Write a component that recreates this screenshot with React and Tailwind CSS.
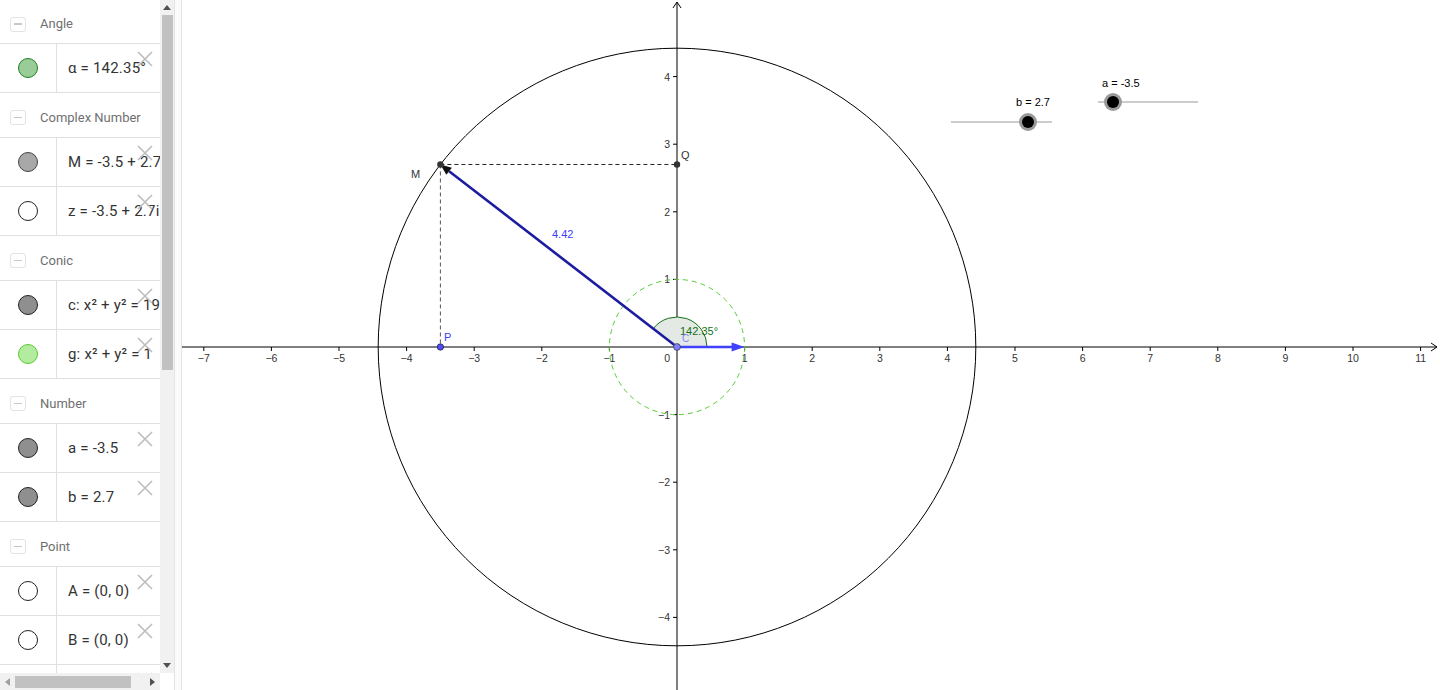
import React from "react";

const O = { x: 677, y: 347 };
const U = 67.6;

const groups = [
  {
    title: "Angle",
    first: true,
    items: [{ text: "α = 142.35°", fill: "#99cc99", stroke: "#1f7f1f" }],
  },
  {
    title: "Complex Number",
    items: [
      { text: "M = -3.5 + 2.7i", fill: "#a8a8a8", stroke: "#444444" },
      { text: "z = -3.5 + 2.7i", fill: "#ffffff", stroke: "#222222" },
    ],
  },
  {
    title: "Conic",
    items: [
      { text: "c: x² + y² = 19.49", fill: "#8f8f8f", stroke: "#222222" },
      { text: "g: x² + y² = 1", fill: "#b3eb9f", stroke: "#55cc33" },
    ],
  },
  {
    title: "Number",
    items: [
      { text: "a = -3.5", fill: "#8f8f8f", stroke: "#222222" },
      { text: "b = 2.7", fill: "#8f8f8f", stroke: "#222222" },
    ],
  },
  {
    title: "Point",
    items: [
      { text: "A = (0, 0)", fill: "#ffffff", stroke: "#222222" },
      { text: "B = (0, 0)", fill: "#ffffff", stroke: "#222222" },
      { text: "C = (0, 0)", fill: "#ffffff", stroke: "#222222" },
    ],
  },
];

const CloseX = () => (
  <svg className="absolute right-[7px] top-[7px]" width="16" height="16" viewBox="0 0 16 16">
    <path d="M1 1 L15 15 M15 1 L1 15" stroke="#bdbdbd" strokeWidth="1.6" fill="none" />
  </svg>
);

const Header = ({ title, first }) => (
  <div
    className={`flex items-center border-b border-[#e0e0e0] pt-[5px] ${first ? "h-[44px]" : "h-[45px]"}`}
  >
    <div className="ml-[10px] flex h-[15px] w-[16px] items-center justify-center rounded-[3px] border border-[#e3e3e3]">
      <div className="h-[1.5px] w-[8px] bg-[#c8c8c8]" />
    </div>
    <span className="ml-[14px] text-[13px] text-[#707070]">{title}</span>
  </div>
);

const Row = ({ text, fill, stroke }) => (
  <div className="relative flex h-[49px] border-b border-[#e0e0e0]">
    <div className="flex w-[57px] shrink-0 items-center justify-center border-r border-[#e0e0e0]">
      <div
        className="h-[20px] w-[20px] rounded-full border"
        style={{ background: fill, borderColor: stroke }}
      />
    </div>
    <div className="flex items-center whitespace-nowrap pl-[11px] text-[15px] tracking-[0.2px] text-[#333]">
      {text}
    </div>
    <CloseX />
  </div>
);

const Tri = ({ dir }) => {
  const d = {
    up: "M0 5 L4 0 L8 5 Z",
    down: "M0 0 L8 0 L4 5 Z",
    left: "M5 0 L5 8 L0 4 Z",
    right: "M0 0 L5 4 L0 8 Z",
  }[dir];
  const w = dir === "up" || dir === "down" ? 8 : 5;
  const h = dir === "up" || dir === "down" ? 5 : 8;
  return (
    <svg width={w} height={h} viewBox={`0 0 ${w} ${h}`}>
      <path d={d} fill={dir === "left" ? "#a0a0a0" : "#505050"} />
    </svg>
  );
};

const Graph = () => {
  const px = (v) => O.x + v * U;
  const py = (v) => O.y - v * U;
  const xs = [];
  for (let i = -7; i <= 11; i++) if (i !== 0) xs.push(i);
  const ys = [-4, -3, -2, -1, 1, 2, 3, 4];
  const M = { x: px(-3.5), y: py(2.7) };
  const R = Math.sqrt(3.5 * 3.5 + 2.7 * 2.7) * U;
  const ang = (142.35 * Math.PI) / 180;
  const ar = 30;
  const ae = { x: O.x + ar * Math.cos(ang), y: O.y - ar * Math.sin(ang) };
  // arrowhead on OM
  const dx = M.x - O.x;
  const dy = M.y - O.y;
  const L = Math.hypot(dx, dy);
  const ux = dx / L;
  const uy = dy / L;
  const bx = M.x - 11 * ux;
  const by = M.y - 11 * uy;
  const head = `${M.x},${M.y} ${bx - 4.5 * uy},${by + 4.5 * ux} ${bx + 4.5 * uy},${by - 4.5 * ux}`;
  const lbl = { fontFamily: "'Liberation Sans', Arial, sans-serif" };

  return (
    <svg className="block h-[690px] flex-1" viewBox="182 0 1258 690">
      <rect x="182" y="0" width="1258" height="690" fill="#ffffff" />
      {/* axes */}
      <line x1="182" y1={O.y} x2="1437" y2={O.y} stroke="#000" strokeWidth="1" />
      <path d={`M1431 ${O.y - 4} L1437 ${O.y} L1431 ${O.y + 4}`} stroke="#000" fill="none" />
      <line x1={O.x} y1="690" x2={O.x} y2="2" stroke="#000" strokeWidth="1" />
      <path d={`M${O.x - 4} 8 L${O.x} 2 L${O.x + 4} 8`} stroke="#000" fill="none" />
      {xs.map((i) => (
        <g key={"x" + i}>
          <line x1={px(i)} y1={O.y} x2={px(i)} y2={O.y + 4} stroke="#000" />
          <text x={px(i)} y={O.y + 15} fontSize="10.5" textAnchor="middle" fill="#333" style={lbl}>
            {i < 0 ? "−" + -i : i}
          </text>
        </g>
      ))}
      {ys.map((i) => (
        <g key={"y" + i}>
          <line x1={O.x - 4} y1={py(i)} x2={O.x} y2={py(i)} stroke="#000" />
          <text x={O.x - 7} y={py(i) + 4} fontSize="10.5" textAnchor="end" fill="#333" style={lbl}>
            {i < 0 ? "−" + -i : i}
          </text>
        </g>
      ))}
      <text x={O.x - 7} y={O.y + 15} fontSize="10.5" textAnchor="end" fill="#333" style={lbl}>
        0
      </text>

      {/* circles */}
      <circle cx={O.x} cy={O.y} r={R} fill="none" stroke="#000" strokeWidth="1" />
      <circle cx={O.x} cy={O.y} r={U} fill="none" stroke="#55cc33" strokeWidth="1" strokeDasharray="5 4" />

      {/* projections */}
      <line x1={M.x} y1={M.y} x2={O.x} y2={M.y} stroke="#222" strokeDasharray="4 3" />
      <line x1={M.x} y1={M.y} x2={M.x} y2={O.y} stroke="#555" strokeDasharray="4 3" />

      {/* angle */}
      <path
        d={`M${O.x} ${O.y} L${O.x + ar} ${O.y} A${ar} ${ar} 0 0 0 ${ae.x} ${ae.y} Z`}
        fill="#e5e9e5"
        stroke="none"
      />
      <path d={`M${O.x + ar} ${O.y} A${ar} ${ar} 0 0 0 ${ae.x} ${ae.y}`} fill="none" stroke="#157015" />

      {/* vectors */}
      <line x1={O.x} y1={O.y} x2={bx} y2={by} stroke="#1c1ca0" strokeWidth="2.6" />
      <polygon points={head} fill="#111" />
      <line x1={O.x} y1={O.y} x2={px(1) - 10} y2={O.y} stroke="#4040ff" strokeWidth="2.6" />
      <polygon points={`${px(1)},${O.y} ${px(1) - 13},${O.y - 4.5} ${px(1) - 13},${O.y + 4.5}`} fill="#4040ff" />

      {/* points */}
      <circle cx={M.x} cy={M.y} r="3.2" fill="#333" />
      <circle cx={O.x} cy={M.y} r="3.2" fill="#333" />
      <circle cx={M.x} cy={O.y} r="3.2" fill="#4d4dff" stroke="#222" strokeWidth="0.7" />
      <circle cx={O.x} cy={O.y} r="3.4" fill="#8080ff" stroke="#333" strokeWidth="0.7" />

      {/* labels */}
      <text x="411" y="178" fontSize="11" fill="#333" style={lbl}>M</text>
      <text x="681" y="159" fontSize="11" fill="#333" style={lbl}>Q</text>
      <text x="444" y="341" fontSize="11" fill="#3c3cff" style={lbl}>P</text>
      <text x="552" y="238" fontSize="11" fill="#3c3cff" style={lbl}>4.42</text>
      <text x="680" y="335" fontSize="11" fill="#157015" style={lbl}>142.35°</text>
      <text x="682" y="342" fontSize="10" fill="#8080ff" style={lbl}>C</text>

      {/* sliders */}
      <line x1="951" y1="122" x2="1052" y2="122" stroke="#999" />
      <circle cx="1028" cy="122" r="9" fill="#9a9a9a" />
      <circle cx="1028" cy="122" r="6" fill="#000" />
      <text x="1016" y="106" fontSize="11" fill="#000" style={lbl}>b = 2.7</text>
      <line x1="1098" y1="102" x2="1198" y2="102" stroke="#999" />
      <circle cx="1113" cy="102" r="9" fill="#9a9a9a" />
      <circle cx="1113" cy="102" r="6" fill="#000" />
      <text x="1102" y="87" fontSize="11" fill="#000" style={lbl}>a = -3.5</text>
    </svg>
  );
};

export default function App() {
  return (
    <div
      className="flex h-[690px] w-[1440px] overflow-hidden bg-white"
      style={{ fontFamily: "Roboto, 'Liberation Sans', sans-serif" }}
    >
      <div className="flex w-[174px] shrink-0 flex-col">
        <div className="flex h-[673px]">
          <div className="w-[160px] overflow-hidden">
            {groups.map((g) => (
              <div key={g.title}>
                <Header title={g.title} first={g.first} />
                {g.items.map((it) => (
                  <Row key={it.text} {...it} />
                ))}
              </div>
            ))}
          </div>
          <div className="flex w-[14px] flex-col items-center bg-[#f1f1f1]">
            <div className="flex h-[15px] items-center justify-center">
              <Tri dir="up" />
            </div>
            <div className="h-[355px] w-[11px] bg-[#c1c1c1]" />
            <div className="flex-1" />
            <div className="flex h-[15px] items-center justify-center">
              <Tri dir="down" />
            </div>
          </div>
        </div>
        <div className="flex h-[17px]">
          <div className="flex w-[160px] items-center bg-[#f1f1f1]">
            <div className="flex w-[15px] justify-center">
              <Tri dir="left" />
            </div>
            <div className="h-[12px] w-[116px] bg-[#c1c1c1]" />
            <div className="flex-1" />
            <div className="flex w-[15px] justify-center">
              <Tri dir="right" />
            </div>
          </div>
          <div className="flex-1 bg-white" />
        </div>
      </div>
      <div className="w-[8px] shrink-0 border-l border-r border-[#e4e4e4] bg-[#fbfbfb]" />
      <Graph />
    </div>
  );
}
